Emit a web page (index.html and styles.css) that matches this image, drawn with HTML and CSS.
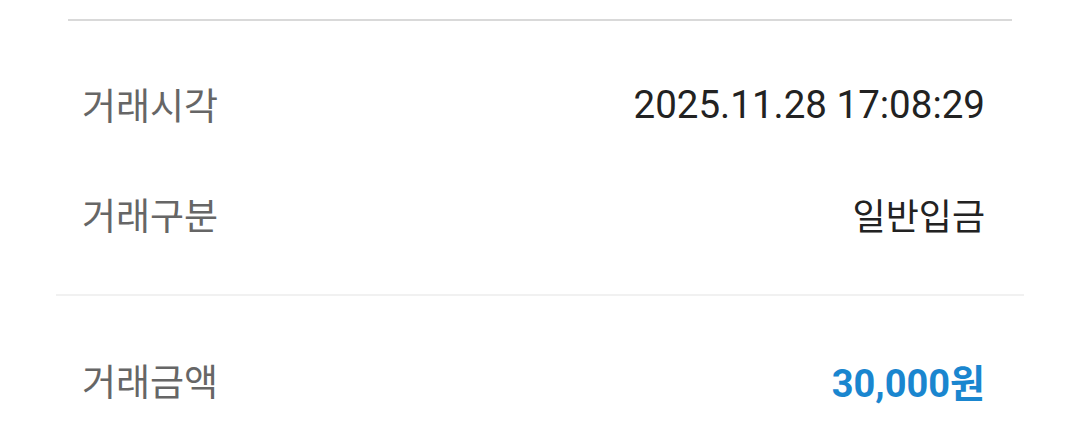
FILE: index.html
```html
<!DOCTYPE html>
<html lang="ko">
<head>
<meta charset="utf-8">
<link rel="stylesheet" href="styles.css">
</head>
<body>
<div class="page">
  <div class="divider-top"></div>
  <div class="section">
    <div class="row">
      <span class="label">거래시각</span>
      <span class="value num">2025.11.28 17:08:29</span>
    </div>
    <div class="row">
      <span class="label">거래구분</span>
      <span class="value">일반입금</span>
    </div>
  </div>
  <div class="divider-mid"></div>
  <div class="section section-amount">
    <div class="row">
      <span class="label">거래금액</span>
      <span class="value amount">30,000원</span>
    </div>
  </div>
</div>
</body>
</html>
```

FILE: styles.css
```css
html, body {
  margin: 0;
  padding: 0;
  background: #ffffff;
}
.page {
  width: 1080px;
  height: 428px;
  overflow: hidden;
  font-family: Roboto, "Noto Sans CJK KR", sans-serif;
}
.divider-top {
  margin: 19px 68px 0;
  height: 2px;
  background: #d9d9d9;
}
.section {
  padding: 28px 95px 0 82px;
}
.row {
  height: 110px;
  display: flex;
  align-items: center;
  justify-content: space-between;
}
.label {
  font-family: "Noto Sans CJK KR", sans-serif;
  font-size: 37px;
  color: #666666;
}
.value {
  font-family: "Noto Sans CJK KR", sans-serif;
  font-size: 36px;
  color: #222222;
}
.value.num {
  font-family: Roboto, sans-serif;
  font-size: 38.5px;
}
.value.amount {
  font-family: Roboto, "Noto Sans CJK KR", sans-serif;
  font-size: 38px;
  font-weight: 700;
  color: #1a86cf;
}
.divider-mid {
  margin: 25px 56px 0;
  height: 2px;
  background: #f1f1f1;
}
.section-amount {
  padding-top: 29px;
}
```
